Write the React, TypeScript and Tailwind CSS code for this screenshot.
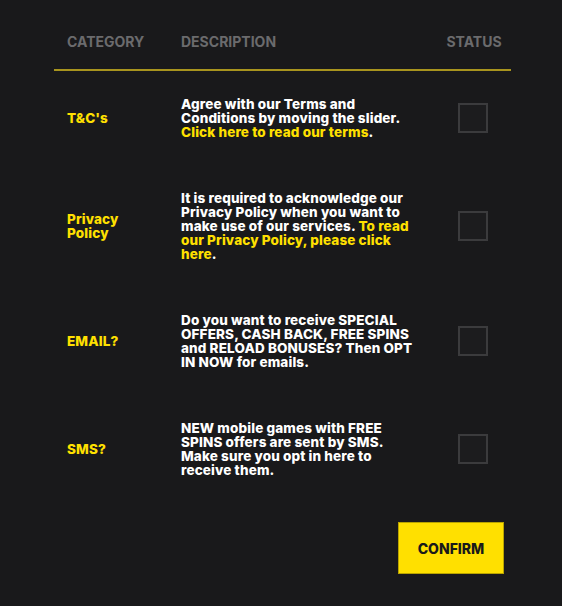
const rows = [
  {
    category: ['T&C\'s'],
    description: (
      <>
        Agree with our Terms and
        <br />
        Conditions by moving the slider.
        <br />
        <span className="text-[#ffe000]">Click here to read our terms</span>.
      </>
    ),
  },
  {
    category: ['Privacy', 'Policy'],
    description: (
      <>
        It is required to acknowledge our
        <br />
        Privacy Policy when you want to
        <br />
        make use of our services. <span className="text-[#ffe000]">To read</span>
        <br />
        <span className="text-[#ffe000]">our Privacy Policy, please click</span>
        <br />
        <span className="text-[#ffe000]">here</span>.
      </>
    ),
  },
  {
    category: ['EMAIL?'],
    description: (
      <>
        Do you want to receive SPECIAL
        <br />
        OFFERS, CASH BACK, FREE SPINS
        <br />
        and RELOAD BONUSES? Then OPT
        <br />
        IN NOW for emails.
      </>
    ),
  },
  {
    category: ['SMS?'],
    description: (
      <>
        NEW mobile games with FREE
        <br />
        SPINS offers are sent by SMS.
        <br />
        Make sure you opt in here to
        <br />
        receive them.
      </>
    ),
  },
];

export default function App() {
  return (
    <div
      className="min-h-[606px] w-full bg-[#19191b] pl-[54px] pr-[51px]"
      style={{ fontFamily: 'Inter, Roboto, "Liberation Sans", sans-serif' }}
    >
      {/* header */}
      <div className="flex border-b-2 border-[#a8941e] pt-[34px] pb-[19px] text-[14px] leading-4 font-bold text-[#6b6b6d]">
        <div className="w-[127px] pl-[13px]">CATEGORY</div>
        <div className="flex-1">DESCRIPTION</div>
        <div className="w-[76px] pl-[2px] text-center">STATUS</div>
      </div>

      {/* rows */}
      {rows.map((r, i) => (
        <div key={i} className="flex items-center py-[26px] text-[13.5px] leading-[14px] font-extrabold tracking-[0.01em]">
          <div className="w-[127px] pl-[13px] text-[#ffe000]">
            {r.category.map((c, j) => (
              <div key={j}>{c}</div>
            ))}
          </div>
          <div className="flex-1 text-white">{r.description}</div>
          <div className="flex w-[76px] justify-center">
            <div className="h-[30px] w-[30px] border-2 border-[#3b3b3d] bg-[#1c1c1e]" />
          </div>
        </div>
      ))}

      <div className="mt-[19px] flex justify-end pr-[7px]">
        <button className="h-[52px] w-[106px] border border-[#b9a300] bg-[#ffe000] text-[14px] font-extrabold text-[#1a1a1a]">
          CONFIRM
        </button>
      </div>
    </div>
  );
}
